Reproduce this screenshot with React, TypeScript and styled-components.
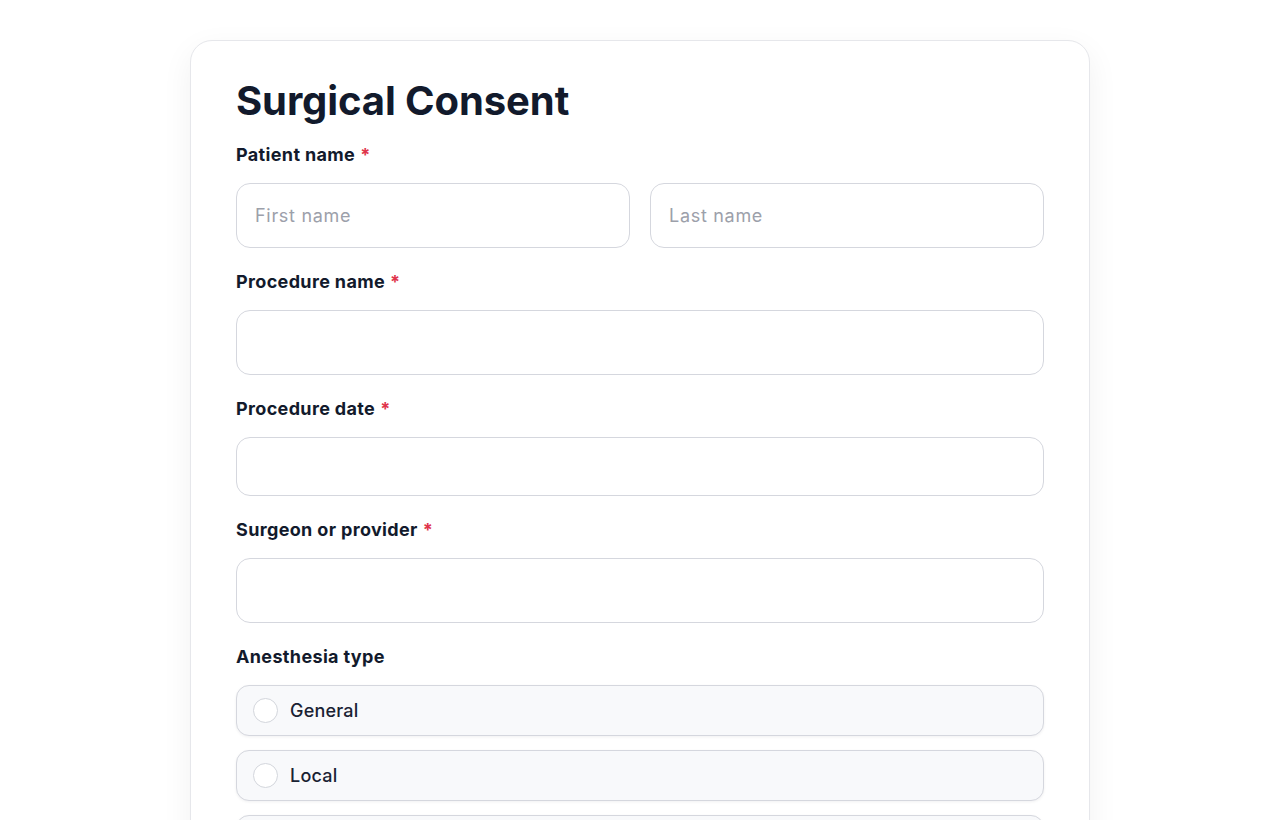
import React from "react";
import styled, { createGlobalStyle } from "styled-components";

const Global = createGlobalStyle`
  html { scrollbar-width: none; }
  html::-webkit-scrollbar { display: none; }
  body {
    margin: 0;
    background: #ffffff;
    font-family: Inter, "Noto Sans", "Liberation Sans", sans-serif;
    color: #111827;
  }
  * { box-sizing: border-box; }
`;

const Page = styled.div`
  display: flex;
  justify-content: center;
  padding: 40px 0 60px;
`;

const Card = styled.form`
  width: 900px;
  background: #ffffff;
  border: 1px solid #e6e7eb;
  border-radius: 22px;
  box-shadow: 0 10px 32px rgba(17, 24, 39, 0.06);
  padding: 36px 45px 45px;
  display: flex;
  flex-direction: column;
  gap: 22px;
`;

const Title = styled.h1`
  margin: 0 0 -4px;
  font-size: 40px;
  line-height: 48px;
  font-weight: 700;
  letter-spacing: -0.1px;
  color: #121a2c;
`;

const Field = styled.div`
  display: flex;
  flex-direction: column;
  gap: 16px;
`;

const Label = styled.label`
  font-size: 18px;
  line-height: 24px;
  font-weight: 700;
  letter-spacing: 0.35px;
  color: #121a2c;
`;

const Req = styled.span`
  color: #e0344b;
  margin-left: 5px;
`;

const Row = styled.div`
  display: grid;
  grid-template-columns: 1fr 1fr;
  gap: 20px;
`;

const Input = styled.input<{ $h?: number }>`
  width: 100%;
  height: ${(p) => p.$h ?? 65}px;
  border: 1px solid #d5d7de;
  border-radius: 14px;
  background: #ffffff;
  padding: 0 18px;
  font-family: inherit;
  font-size: 18px;
  letter-spacing: 0.7px;
  color: #111827;
  outline: none;
  &::placeholder {
    color: #9ca0aa;
  }
`;

const Options = styled.div`
  display: flex;
  flex-direction: column;
  gap: 14px;
  margin-top: 0;
`;

const Option = styled.label`
  display: flex;
  align-items: center;
  gap: 12px;
  height: 51px;
  padding: 0 16px;
  background: #f8f9fb;
  border: 1px solid #d5d7de;
  border-radius: 13px;
  box-shadow: 0 1px 3px rgba(17, 24, 39, 0.06);
  cursor: pointer;
`;

const Circle = styled.span`
  width: 25px;
  height: 25px;
  border-radius: 50%;
  border: 1.5px solid #d3d6dc;
  background: #ffffff;
  flex: none;
`;

const OptionText = styled.span`
  font-size: 18px;
  font-weight: 500;
  color: #1a2233;
  letter-spacing: 0.2px;
`;

const anesthesia = ["General", "Local", "Regional", "Sedation"];

export default function App() {
  return (
    <>
      <Global />
      <Page>
        <Card onSubmit={(e) => e.preventDefault()}>
          <Title>Surgical Consent</Title>
          <Field>
            <Label>
              Patient name<Req>*</Req>
            </Label>
            <Row>
              <Input placeholder="First name" />
              <Input placeholder="Last name" />
            </Row>
          </Field>
          <Field>
            <Label>
              Procedure name<Req>*</Req>
            </Label>
            <Input />
          </Field>
          <Field>
            <Label>
              Procedure date<Req>*</Req>
            </Label>
            <Input $h={59} />
          </Field>
          <Field>
            <Label>
              Surgeon or provider<Req>*</Req>
            </Label>
            <Input />
          </Field>
          <Field>
            <Label>Anesthesia type</Label>
            <Options>
              {anesthesia.map((a) => (
                <Option key={a}>
                  <Circle />
                  <OptionText>{a}</OptionText>
                </Option>
              ))}
            </Options>
          </Field>
        </Card>
      </Page>
    </>
  );
}
